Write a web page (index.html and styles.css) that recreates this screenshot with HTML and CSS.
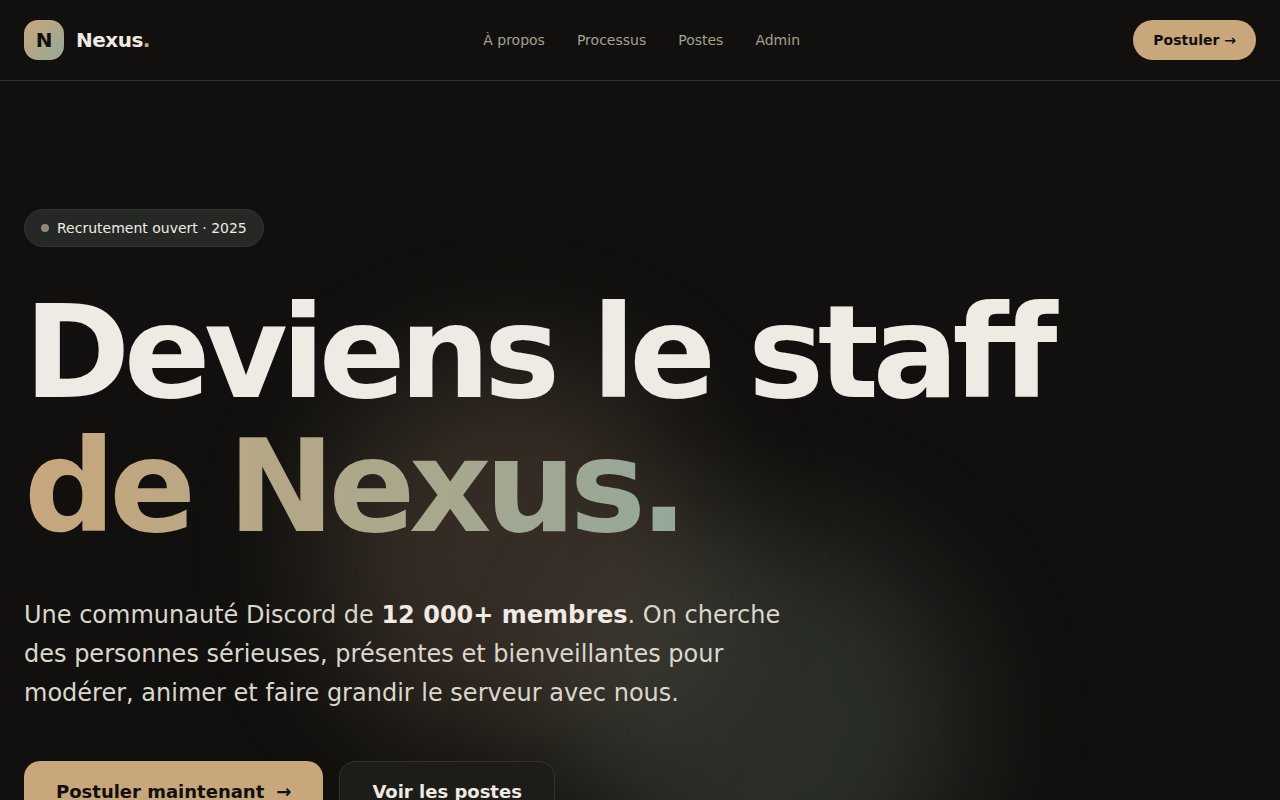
FILE: index.html
```
<!DOCTYPE html>
<html lang="fr">
<head>
  <meta charset="UTF-8">
  <meta name="viewport" content="width=device-width, initial-scale=1">
  <title>Nexus. - Recrutement staff</title>
  <link rel="stylesheet" href="styles.css">
</head>
<body>
  <!-- Navigation -->
  <header class="header">
    <a href="#" class="logo">
      <span class="logo-mark">N</span>
      <span class="logo-text">Nexus<span class="logo-dot">.</span></span>
    </a>
    <nav class="nav">
      <a href="#about">À propos</a>
      <a href="#process">Processus</a>
      <a href="#roles">Postes</a>
      <a href="#admin">Admin</a>
    </nav>
    <button type="button" class="btn-small">Postuler →</button>
  </header>

  <!-- Hero -->
  <main class="hero">
    <div class="glow glow-warm"></div>
    <div class="glow glow-sage"></div>

    <div class="hero-content">
      <div class="badge"><span class="badge-dot"></span>Recrutement ouvert · 2025</div>
      <h1>Deviens le staff<br><span class="gradient-text">de Nexus.</span></h1>
      <p class="lead">Une communauté Discord de <strong>12 000+ membres</strong>. On cherche des personnes sérieuses, présentes et bienveillantes pour modérer, animer et faire grandir le serveur avec nous.</p>
      <div class="actions">
        <button type="button" class="btn btn-primary">Postuler maintenant <span>→</span></button>
        <button type="button" class="btn btn-secondary">Voir les postes</button>
      </div>
    </div>
  </main>
</body>
</html>
```
FILE: styles.css
```
:root {
  --bg: #11100e;
  --cream: #efeae3;
  --tan: #c8a77c;
  --sage: #94a898;
  --muted: #a3a08f;
  --line: #34332b;
}
* {
  box-sizing: border-box;
}
body {
  margin: 0;
  background-color: var(--bg);
  color: var(--cream);
  font-family: 'DejaVu Sans', sans-serif;
}
a {
  color: inherit;
  text-decoration: none;
}
button {
  font-family: inherit;
  font-weight: bold;
  cursor: pointer;
}
/* Navigation styles */
.header {
  display: flex;
  justify-content: space-between;
  align-items: center;
  padding: 20px 24px;
  border-bottom: 1px solid var(--line);
}
.logo {
  display: flex;
  align-items: center;
  gap: 12px;
  font-size: 20px;
  font-weight: bold;
}
.logo-text {
  letter-spacing: -0.025em;
}
.logo-mark {
  display: flex;
  align-items: center;
  justify-content: center;
  width: 40px;
  height: 40px;
  border-radius: 14px;
  background: linear-gradient(135deg, var(--tan), var(--sage));
  color: var(--bg);
}
.logo-dot {
  color: var(--tan);
}
.nav {
  display: flex;
  gap: 32px;
  color: var(--muted);
  font-size: 14px;
  line-height: 20px;
}
.nav a:hover {
  color: var(--cream);
}
.btn-small {
  padding: 10px 20px;
  border: none;
  border-radius: 20px;
  background-color: var(--tan);
  color: var(--bg);
  font-size: 14px;
  line-height: 20px;
}
/* Hero */
.hero {
  position: relative;
  overflow: hidden;
  padding: 128px 24px;
}
.hero-content {
  position: relative;
  max-width: 1232px;
  margin: 0 auto;
}
/* Blurred lights behind the title */
.glow {
  position: absolute;
  width: 384px;
  height: 384px;
  border-radius: 50%;
  filter: blur(64px);
}
.glow-warm {
  top: 280px;
  left: 25%;
  background-color: rgba(200, 158, 130, 0.2);
}
.glow-sage {
  top: 448px;
  right: 25%;
  background-color: rgba(152, 168, 152, 0.2);
}
.badge {
  display: inline-flex;
  align-items: center;
  gap: 8px;
  padding: 8px 16px;
  border: 1px solid #34352f;
  border-radius: 19px;
  background-color: #262825;
  font-size: 14px;
  line-height: 20px;
}
.badge-dot {
  width: 8px;
  height: 8px;
  border-radius: 50%;
  background-color: #928779;
}
h1 {
  margin: 39px 0 42px;
  font-size: 128px;
  line-height: 134px;
  letter-spacing: -0.05em;
}
.gradient-text {
  background: linear-gradient(90deg, var(--tan), var(--sage));
  -webkit-background-clip: text;
  background-clip: text;
  color: transparent;
}
.lead {
  max-width: 768px;
  margin: 0 0 48px;
  color: #dad7cc;
  font-size: 24px;
  line-height: 39px;
}
.lead strong {
  color: var(--cream);
}
.actions {
  display: flex;
  flex-wrap: wrap;
  gap: 16px;
}
.btn {
  display: flex;
  align-items: center;
  gap: 12px;
  padding: 16px 32px;
  border: none;
  border-radius: 16px;
  font-size: 18px;
  line-height: 28px;
}
.btn-primary {
  background-color: var(--tan);
  color: var(--bg);
}
.btn-secondary {
  border: 1px solid var(--line);
  background-color: #1d1c18;
  color: var(--cream);
}
/* Small screens */
@media (max-width: 768px) {
  .nav {
    display: none;
  }
  h1 {
    font-size: 56px;
    line-height: 60px;
  }
  .lead {
    font-size: 18px;
    line-height: 30px;
  }
}
```
